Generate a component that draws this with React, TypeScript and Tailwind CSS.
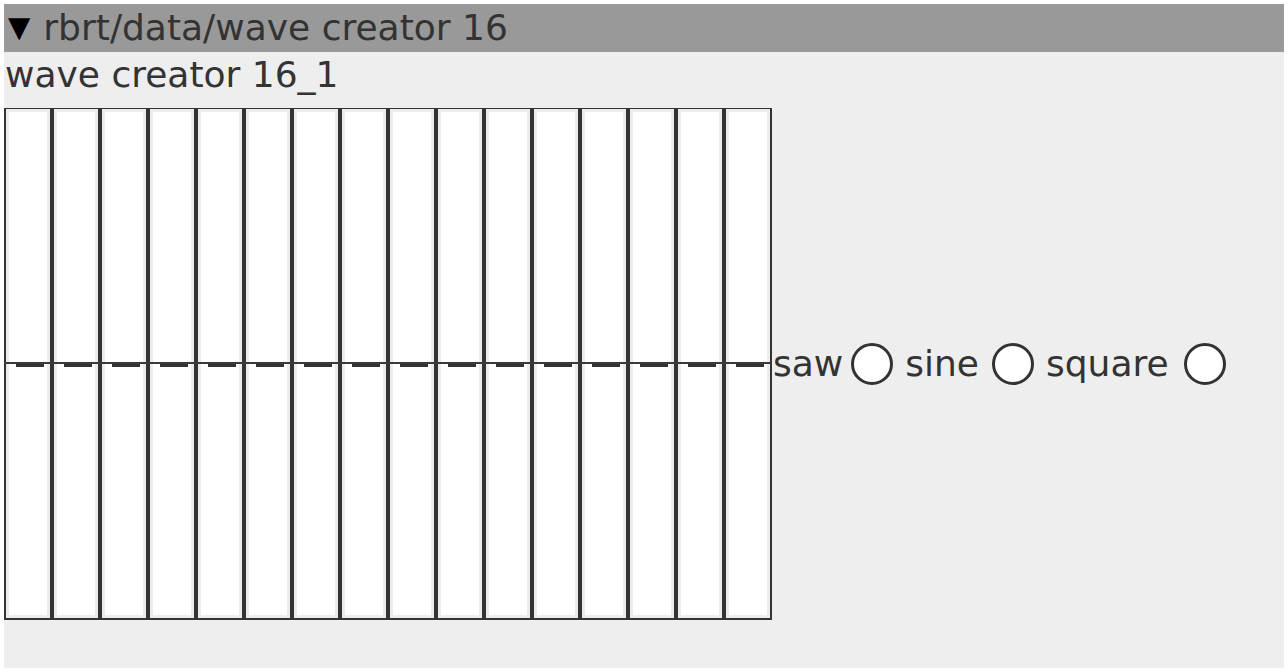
import React from 'react';

const font = { fontFamily: '"DejaVu Sans", Verdana, sans-serif' };

const waveTypes = [
  { name: 'saw', gapBefore: 'ml-[8px]', gapAfter: 'mr-[12px]' },
  { name: 'sine', gapBefore: 'ml-[13px]', gapAfter: 'mr-[12px]' },
  { name: 'square', gapBefore: 'ml-[15px]', gapAfter: 'mr-0' },
];

function SliderCell() {
  return (
    <div className="relative w-[48px] h-full border-x-2 border-[#333333] flex">
      <div className="flex-1 bg-white border-[3px] border-[#ececec]" />
      {/* thumb */}
      <div className="absolute left-[10px] top-[254px] w-[28px] h-[4px] bg-[#333333]" />
    </div>
  );
}

function WaveSliders() {
  const cells = Array.from({ length: 16 }, (_, i) => i);
  return (
    <div className="relative flex w-[768px] h-[512px] border-t border-b-2 border-[#333333] shrink-0">
      {cells.map((i) => (
        <SliderCell key={i} />
      ))}
      {/* zero line across all sliders */}
      <div className="absolute left-0 right-0 top-[253px] h-[2px] bg-[#3a3a3a]" />
    </div>
  );
}

function RadioDot({ className }: { className: string }) {
  return (
    <span className={`inline-block w-[42px] h-[42px] rounded-full bg-white border-[3.5px] border-[#333333] ${className}`} />
  );
}

export default function App() {
  return (
    <div className="w-[1288px] h-[672px] bg-white p-[4px]" style={font}>
      <div className="w-[1280px] h-[664px] bg-[#eeeeee] flex flex-col">
        {/* header */}
        <div className="h-[48px] bg-[#999999] flex items-center pl-[4px] text-[36px] text-[#333333] whitespace-nowrap">
          <span className="text-black text-[29px]">▼</span>
          <span className="ml-[13px]">rbrt/data/wave creator 16</span>
        </div>

        {/* module title */}
        <div className="h-[56px] pt-[2px] pl-[1px] text-[36px] text-[#333333] leading-[42px] whitespace-nowrap">
          wave creator 16_1
        </div>

        {/* sliders + wave type selection */}
        <div className="flex items-center">
          <WaveSliders />
          <div className="flex items-center text-[36px] text-[#333333] pl-[1px] whitespace-nowrap">
            {waveTypes.map((w) => (
              <React.Fragment key={w.name}>
                <span>{w.name}</span>
                <RadioDot className={`${w.gapBefore} ${w.gapAfter}`} />
              </React.Fragment>
            ))}
          </div>
        </div>
      </div>
    </div>
  );
}
